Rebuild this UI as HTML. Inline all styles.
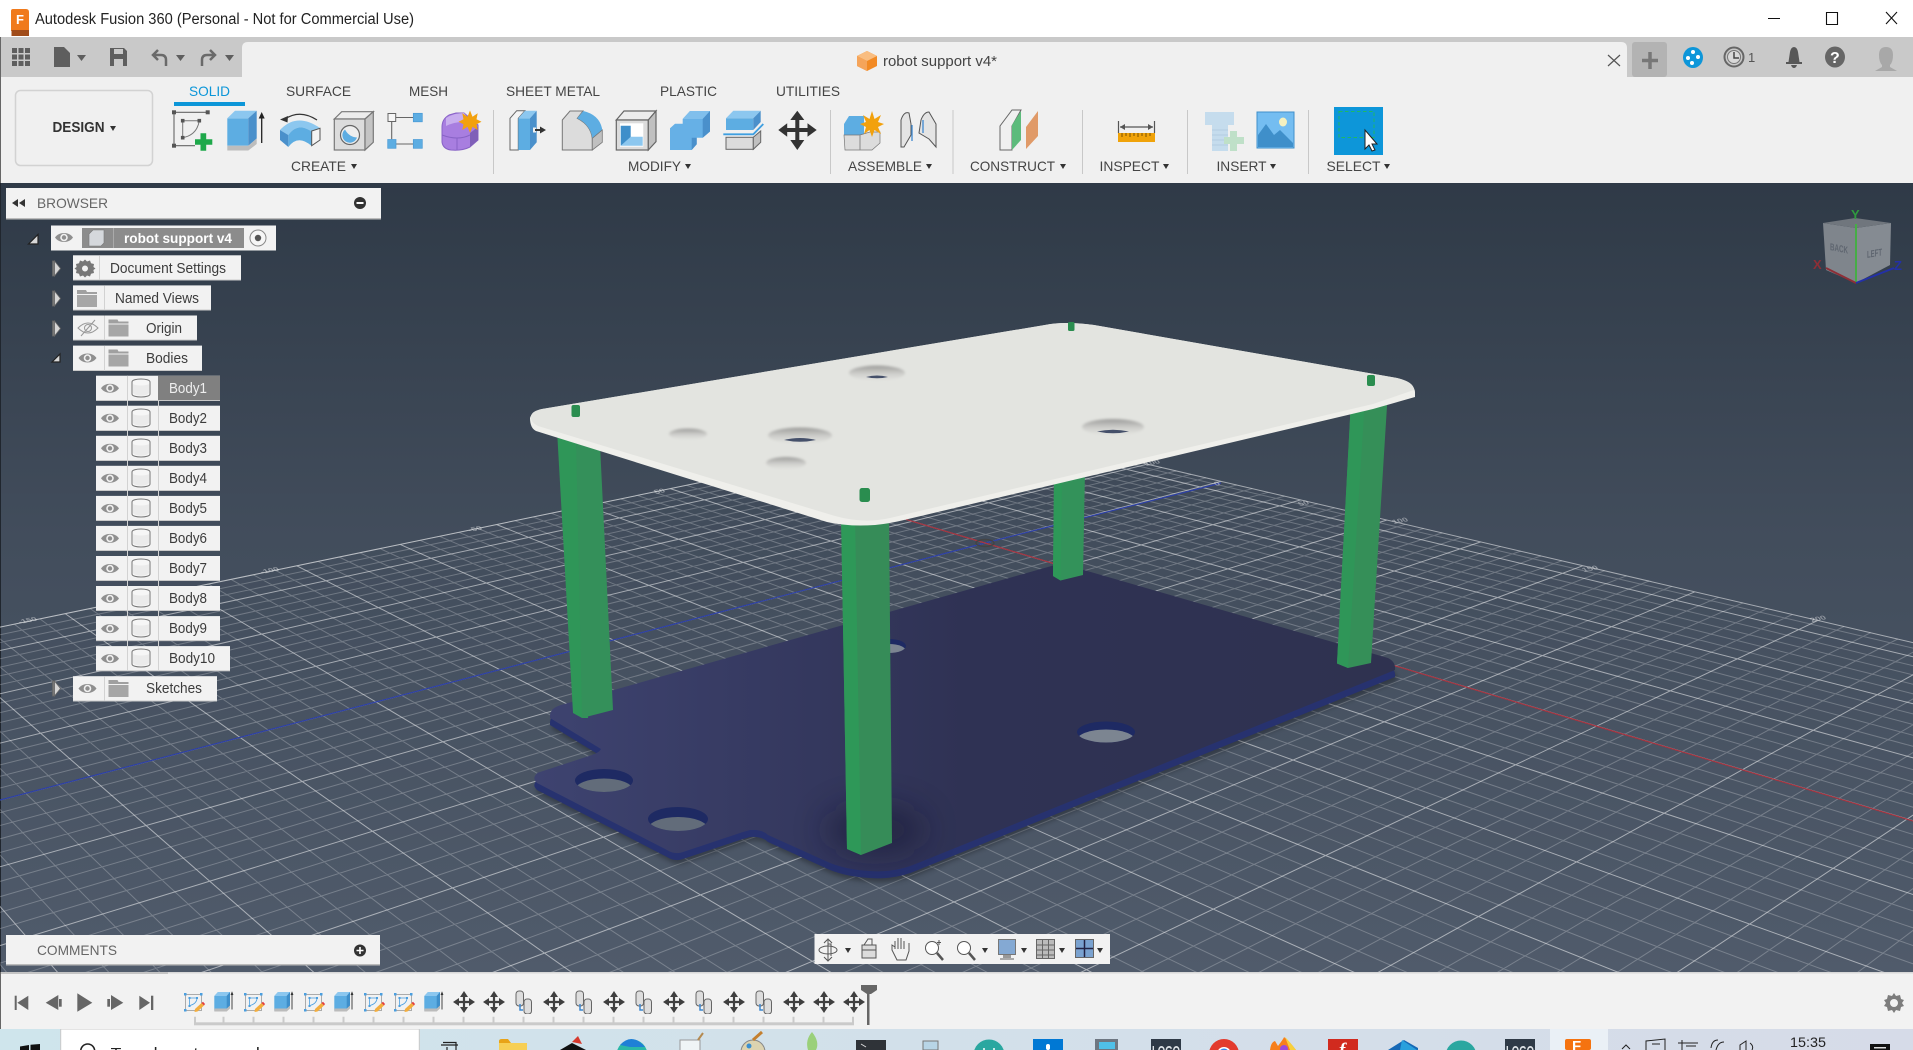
<!DOCTYPE html>
<html lang="en"><head><meta charset="utf-8"><title>Autodesk Fusion 360</title>
<style>
html,body{margin:0;padding:0;width:1913px;height:1050px;overflow:hidden;background:#fff}
svg{display:block}
text{font-family:"Liberation Sans",sans-serif;fill:#3a3a3a}
.tab{font-size:14px;fill:#444}
.lbl{font-size:14px;fill:#444}
.row{font-size:14.5px;fill:#3c3c3c}
.glabel{font-size:9px;fill:rgba(255,255,255,.4);font-weight:bold}
</style></head><body>
<svg xmlns="http://www.w3.org/2000/svg" width="1913" height="1050" viewBox="0 0 1913 1050">
<defs>
<linearGradient id="bg" x1="0" y1="0" x2="0" y2="1"><stop offset="0" stop-color="#2f3a47"/><stop offset=".45" stop-color="#424d5c"/><stop offset="1" stop-color="#505b6b"/></linearGradient>
<linearGradient id="base" x1="0" y1="0" x2="1" y2="0"><stop offset="0" stop-color="#3e4370"/><stop offset=".5" stop-color="#2f3254"/><stop offset="1" stop-color="#2f3250"/></linearGradient>
<linearGradient id="task" x1="0" y1="0" x2="1" y2="0"><stop offset="0" stop-color="#cfe5ec"/><stop offset="1" stop-color="#d6dbe8"/></linearGradient>
<linearGradient id="holeT" x1="0" y1="0" x2="0" y2="1"><stop offset="0" stop-color="#9c9c9a"/><stop offset=".55" stop-color="#cfcfcc"/><stop offset="1" stop-color="#e2e3df"/></linearGradient>
<filter id="b2" x="-30%" y="-30%" width="160%" height="160%"><feGaussianBlur stdDeviation="2.500"/></filter>
<filter id="b1" x="-30%" y="-60%" width="160%" height="220%"><feGaussianBlur stdDeviation="1.200"/></filter>
<filter id="b14" x="-150%" y="-150%" width="400%" height="400%"><feGaussianBlur stdDeviation="16"/></filter>
<clipPath id="h1"><ellipse cx="604" cy="780.500" rx="29" ry="11.500"/></clipPath>
<clipPath id="h2"><ellipse cx="678" cy="819" rx="30" ry="12"/></clipPath>
<clipPath id="h3"><ellipse cx="1106" cy="732" rx="29" ry="10.500"/></clipPath>
<clipPath id="h4"><ellipse cx="889" cy="646" rx="17" ry="7"/></clipPath>
<symbol id="eye" viewBox="0 0 20 12"><path d="M1 6C5 0 15 0 19 6C15 12 5 12 1 6Z" fill="#8f8f8f"/><circle cx="10" cy="6" r="3.800" fill="#f0f0f0"/><circle cx="10" cy="6" r="2.200" fill="#8f8f8f"/></symbol>
<symbol id="cyl" viewBox="0 0 20 20"><path d="M1 4C1 0 19 0 19 4V16C19 20 1 20 1 16Z" fill="#f6f6f6" stroke="#777" stroke-width="1"/><path d="M2 6C5 8 15 8 18 6V15C15 18.500 5 18.500 2 15Z" fill="#ebebeb"/></symbol>
<symbol id="fold" viewBox="0 0 20 17"><path d="M0 0H9L10 2H20V4H0Z" fill="#a0a0a0"/><rect y="5" width="20" height="12" fill="#a6a6a6"/></symbol>
<symbol id="tsk" viewBox="0 0 24 24"><rect x="3.500" y="4.500" width="16" height="16" fill="#f2f2f2" stroke="#999" stroke-width=".8"/><g fill="#4a9fe0"><rect x="2" y="3" width="2.500" height="2.500"/><rect x="18" y="3" width="2.500" height="2.500"/><rect x="2" y="19" width="2.500" height="2.500"/><rect x="6.500" y="7" width="2" height="2"/><rect x="14" y="7" width="2" height="2"/><rect x="6.500" y="15" width="2" height="2"/></g><path d="M8.500 8H14M7.500 9V15M8 15.500Q14 14 15 9" fill="none" stroke="#4a9fe0" stroke-width=".8"/><path d="M13 19L19.500 13L22 15.500L15.500 21.500L12.500 22Z" fill="#f4ad3c"/><path d="M19.500 13L21 11.800L23 14L22 15.500Z" fill="#e23b3b"/></symbol>
<symbol id="tex" viewBox="0 0 24 24"><path d="M2.300 6L6 2H18V17L14.700 20.500H2.300Z" fill="#5dade2"/><path d="M2.300 6L6 2H18L14.700 6Z" fill="#8cc7ef"/><path d="M14.700 6L18 2V17L14.700 20.500Z" fill="#3f8fca"/><path d="M2.300 18.500H14.700L18 15.500V18.500L14.700 21.500H2.300Z" fill="#bbb"/><path d="M20 19.500V3M19 5L20 2.500L21 5" stroke="#333" stroke-width=".9" fill="none"/></symbol>
<symbol id="tmv" viewBox="0 0 24 24"><path d="M12 1L16 7H13.100V10.900H17V8L23 12L17 16V13.100H13.100V17H16L12 23L8 17H10.900V13.100H7V16L1 12L7 8V10.900H10.900V7H8Z" fill="#3f3f3f"/></symbol>
<symbol id="tjt" viewBox="0 0 24 24"><rect x="4" y="1" width="7.500" height="15" rx="3" fill="#ddd" stroke="#666"/><rect x="12" y="9" width="7.500" height="15" rx="3" fill="#ddd" stroke="#666"/><path d="M8 14V20H11" stroke="#3d88d0" fill="none" stroke-width="1.500"/></symbol>
</defs>

<!-- Title bar -->
<rect width="1913" height="37" fill="#fff"/>
<path d="M13 9H26Q29 9 29 12V31H11V11Q11 9 13 9Z" fill="#f07a1c"/>
<rect x="11.500" y="30" width="17.500" height="6" fill="#a04c1a"/>
<text x="16" y="24" style="font-size:13px;font-weight:bold;fill:#fff">F</text>
<text x="35" y="24" textLength="379" lengthAdjust="spacingAndGlyphs" style="font-size:15.500px;fill:#222">Autodesk Fusion 360 (Personal - Not for Commercial Use)</text>
<path d="M1768 18.500H1780M1826.500 12.500H1837.500V24.500H1826.500ZM1886 12L1897 24M1897 12L1886 24" stroke="#111" stroke-width="1.100" fill="none"/>

<!-- Top grey bar -->
<rect y="37" width="1913" height="40" fill="#c9c9c9"/>
<path d="M242 77V48Q242 42 248 42H1621Q1627 42 1627 48V77Z" fill="#f0f0f0"/>
<rect y="77" width="1913" height="106" fill="#f0f0f0"/>
<rect x="1632" y="42" width="35" height="35" rx="3" fill="#b3b3b3"/>
<path d="M1650 52V69M1642 60.500H1658" stroke="#777" stroke-width="3.500"/>
<rect x="0" y="37" width="1" height="992" fill="#666"/>

<!-- Quick access -->
<g fill="#5e5e5e"><rect x="12" y="48" width="5" height="5"/><rect x="18.500" y="48" width="5" height="5"/><rect x="25" y="48" width="5" height="5"/><rect x="12" y="54.500" width="5" height="5"/><rect x="18.500" y="54.500" width="5" height="5"/><rect x="25" y="54.500" width="5" height="5"/><rect x="12" y="61" width="5" height="5"/><rect x="18.500" y="61" width="5" height="5"/><rect x="25" y="61" width="5" height="5"/>
<path d="M54 47H64L70 53V67H54Z"/><path d="M77 55H86L81.500 61Z"/>
<path d="M110 48H124L127 51V66H110ZM114 49V54H123V49ZM114 59V66H123V59Z" fill-rule="evenodd"/>
<path d="M176 55H185L180.500 61Z"/><path d="M225 55H234L229.500 61Z"/></g>
<path d="M166 66V60Q166 55 161 55H154M158 50L153 55L158 60" fill="none" stroke="#6a6a6a" stroke-width="2.500"/>
<path d="M202 66V60Q202 55 207 55H214M210 50L215 55L210 60" fill="none" stroke="#6a6a6a" stroke-width="2.500"/>

<!-- Document tab -->
<path d="M867 51L877 56V66L867 71L857 66V56Z" fill="#f28a24"/><path d="M867 51L877 56L867 61L857 56Z" fill="#f9bd80"/><path d="M867 61V71L857 66V56Z" fill="#f5a45a"/>
<text x="883" y="66" textLength="114" lengthAdjust="spacingAndGlyphs" style="font-size:15px;fill:#444">robot support v4*</text>
<path d="M1608 55L1620 66M1620 55L1608 66" stroke="#555" stroke-width="1.200"/>

<!-- right header icons -->
<ellipse cx="1693" cy="57.500" rx="10" ry="10.500" fill="#0d96d9"/><circle cx="1693" cy="52" r="2" fill="#fff"/><circle cx="1688" cy="58" r="2" fill="#fff"/><circle cx="1698" cy="57" r="2" fill="#fff"/><circle cx="1692" cy="63" r="2" fill="#fff"/>
<circle cx="1734" cy="57" r="9.500" fill="#c9c9c9" stroke="#666" stroke-width="2"/><circle cx="1734" cy="57" r="6.500" fill="#d8d8d8" stroke="#777"/><path d="M1734 52V58H1739" stroke="#444" stroke-width="1.500" fill="none"/>
<text x="1748" y="62" style="font-size:13px;fill:#555">1</text>
<path d="M1794 47Q1797 47 1798 52L1799.500 62H1802V64H1786V62H1788.500L1790 52Q1791 47 1794 47ZM1791 65H1797Q1796 68 1794 68Q1792 68 1791 65Z" fill="#575757"/>
<ellipse cx="1835" cy="57" rx="10" ry="10.500" fill="#666"/><text x="1830" y="63" style="font-size:16px;font-weight:bold;fill:#fff">?</text>
<path d="M1886 47Q1893 47 1893 55Q1893 62 1890 65V67L1897 71H1875L1882 67V65Q1879 62 1879 55Q1879 47 1886 47Z" fill="#a8a8a8"/>

<!-- Ribbon tabs -->
<text class="tab" x="189" y="96" textLength="41" lengthAdjust="spacingAndGlyphs" style="fill:#0c96d8">SOLID</text>
<rect x="174" y="102" width="71" height="4" fill="#0c96d8"/>
<text class="tab" x="286" y="96" textLength="65" lengthAdjust="spacingAndGlyphs">SURFACE</text>
<text class="tab" x="409" y="96" textLength="39" lengthAdjust="spacingAndGlyphs">MESH</text>
<text class="tab" x="506" y="96" textLength="94" lengthAdjust="spacingAndGlyphs">SHEET METAL</text>
<text class="tab" x="660" y="96" textLength="57" lengthAdjust="spacingAndGlyphs">PLASTIC</text>
<text class="tab" x="776" y="96" textLength="64" lengthAdjust="spacingAndGlyphs">UTILITIES</text>

<!-- Design button -->
<rect x="15.500" y="90.500" width="137" height="75" rx="5" fill="#f0f0f0" stroke="#d2d2d2" stroke-width="1.500"/>
<text x="52.500" y="132" textLength="52" lengthAdjust="spacingAndGlyphs" style="font-size:14.500px;font-weight:bold;fill:#333">DESIGN</text>
<path d="M110 126H116L113 131Z" fill="#333"/>

<!-- CREATE icons -->
<!-- sketch -->
<path d="M174 112.300H207.700M174 112.300V145.700M174 145.700H195" stroke="#666" stroke-width="1.100" fill="none"/>
<path d="M182.700 120.700H199.300M182.700 120.700V137.700M182.700 137.700Q197 135 199.300 120.700" stroke="#777" stroke-width="1" fill="none"/>
<g fill="#555"><rect x="172" y="110.300" width="4" height="4"/><rect x="205.700" y="110.300" width="4" height="4"/><rect x="172" y="143.700" width="4" height="4"/><rect x="180.900" y="118.900" width="3.600" height="3.600"/><rect x="197.500" y="118.900" width="3.600" height="3.600"/><rect x="180.900" y="135.900" width="3.600" height="3.600"/></g>
<path d="M200.500 133.300H206.200V139.200H212.300V144.800H206.200V150.700H200.500V144.800H195V139.200H200.500Z" fill="#1ea84a"/>
<!-- extrude -->
<rect x="227.300" y="118.300" width="21" height="27.400" fill="#5dade2"/><path d="M227.300 118.300L235 110.700H256.700L248.300 118.300Z" fill="#8cc7ef"/><path d="M248.300 118.300L256.700 110.700V138.500L248.300 145.700Z" fill="#4a90cb"/><path d="M227.300 145.700H248.300L256.700 138.500V144L248.300 150.500H227.300Z" fill="#bdbdbd"/><path d="M261.700 143V114" stroke="#222" stroke-width="1.300"/><path d="M258.700 118.500L261.700 112L264.700 118.500Z" fill="#222"/>
<!-- revolve -->
<path d="M285 119Q300 109 317 120" fill="none" stroke="#333" stroke-width="1.300"/><path d="M280 119.500L288 116L287.500 122.500Z" fill="#333"/>
<path d="M280 130Q296.700 112 320 128L311.700 131.700Q298 121.700 288.300 135Z" fill="#8cc7ef"/>
<path d="M288.300 135Q298 121.700 311.700 131.700V146Q298 134 288.300 147Z" fill="#5dade2"/>
<path d="M280 130L288.300 135V147L280 140Z" fill="#4a90cb"/>
<path d="M311.700 131L320 128.300V140L311.700 145.700Z" fill="#f4f4f4" stroke="#555"/>
<!-- hole -->
<path d="M334.300 119L341.700 111.700H373.300L365 119Z" fill="#ececec" stroke="#777" stroke-width="1.200"/><rect x="334.300" y="119" width="30.700" height="31" fill="#dcdcdc" stroke="#777" stroke-width="1.200"/><path d="M365 119L373.300 111.700V142.300L365 150Z" fill="#c4c4c4" stroke="#777" stroke-width="1.200"/><circle cx="350" cy="135" r="9.500" fill="#eee" stroke="#666" stroke-width="1.200"/><path d="M345 129.500A7.500 7.500 0 1 0 357 137.500Q349 137 345 129.500Z" fill="#5dade2"/>
<!-- pattern -->
<path d="M395.700 117.500H413.300M395.700 144H413.300M391.700 121.700V139.300" stroke="#666" stroke-width="1.100"/><rect x="388" y="113.500" width="7.700" height="8" fill="#f6f6f6" stroke="#666"/><rect x="413.300" y="113.300" width="9" height="8.500" fill="#5dade2" stroke="#4a9ad6" stroke-width=".7"/><rect x="387.700" y="139.500" width="8.300" height="8.800" fill="#5dade2" stroke="#4a9ad6" stroke-width=".7"/><rect x="413.300" y="139.500" width="9" height="8.800" fill="#5dade2" stroke="#4a9ad6" stroke-width=".7"/>
<!-- form -->
<path d="M442 127Q442 119 449 115L456 113H464L478 125V140L470 147Q462 151 451 150Q443 149 442 142Z" fill="#a87ee0" stroke="#8863c6"/><path d="M446 118Q454 113 464 113L472 123Q458 120 446 126Z" fill="#c8aeee"/><path d="M442 135Q458 141 470 135M457 138V150" stroke="#8863c6" fill="none"/><path d="M470 147V133L478 127V140Z" fill="#7f5fb8"/>
<path d="M470 110.500L472.500 116.800L477.700 113.200L476.500 119.200L481.500 121.700L476.500 124.200L477.700 130L472.500 126.800L470 132.800L467.500 126.800L462.300 130L463.500 124.200L458.500 121.700L463.500 119.200L462.300 113.200L467.500 116.800Z" fill="#f2a10d"/>

<rect x="493" y="110" width="1" height="64" fill="#c8c8c8"/>

<!-- MODIFY icons -->
<path d="M510 118.300L516.700 110.700H525L518.300 118.300V150H510Z" fill="#f4f4f4" stroke="#666"/>
<rect x="518.300" y="118.300" width="11.700" height="31.700" fill="#5dade2"/><path d="M518.300 118.300L525 110.700H536.700L530 118.300Z" fill="#8cc7ef"/><path d="M530 118.300L536.700 110.700V142.300L530 150Z" fill="#4a90cb"/>
<rect x="533" y="127.500" width="3" height="5" fill="#f0f0f0"/><path d="M535 130H541" stroke="#333" stroke-width="2"/><path d="M540 126.500L546 130L540 133.500Z" fill="#333"/>

<path d="M562.300 120L570 111H583L577.300 118.300Q590.700 125 592.300 138.300V150H562.300Z" fill="#dcdcdc" stroke="#777"/>
<path d="M577.300 118.300L583.300 111Q600 115 602.300 130L592.300 138.300Q590.700 125 577.300 118.300Z" fill="#5dade2"/>
<path d="M592.300 138.300L602.300 130V142.300L592.300 150Z" fill="#c0c0c0" stroke="#777" stroke-width=".8"/>

<path d="M616.300 120L624 111H656L648.300 120Z" fill="#ececec" stroke="#666" stroke-width="1.200"/><rect x="616.300" y="120" width="32" height="30" fill="#dcdcdc" stroke="#666" stroke-width="1.200"/><path d="M648.300 120L656 111V141.700L648.300 150Z" fill="#c0c0c0" stroke="#666" stroke-width="1.200"/><rect x="620" y="123.300" width="23.300" height="23.400" fill="#fff"/><path d="M620.700 125.700H630.700V140L620.700 145.700Z" fill="#3f8fca"/><path d="M630.700 136.700H642.700V145.700H620.700Z" fill="#8cc7ef"/>

<path d="M670 128.300L675 123.700H682.700V119L690 111H710V131.500L702.700 137.700H696.700V144.300L691.700 150H670Z" fill="#66b0e6"/>
<path d="M682.700 119L690 111H710L702.700 119Z" fill="#80bfec"/><path d="M702.700 119L710 111V131.500L702.700 137.700Z" fill="#4a90cb"/><path d="M691.700 137.700H696.700V144.300L691.700 150Z" fill="#4a90cb"/>

<path d="M726 118.300L733.300 110.700H760.700L753.300 118.300Z" fill="#8cc7ef"/><rect x="726" y="118.300" width="27.300" height="11.700" fill="#5dade2"/><path d="M753.300 118.300L760.700 110.700V122L753.300 130Z" fill="#4a90cb"/>
<path d="M723.300 134.300H753.300L763.300 124" fill="none" stroke="#3f9fe0" stroke-width="1.800"/>
<rect x="726" y="137.300" width="27.300" height="12" fill="#dcdcdc" stroke="#666"/><path d="M753.300 137.300L760.700 131V142.300L753.300 149.300Z" fill="#c0c0c0" stroke="#666"/>

<path d="M797.300 110.700L804.300 120H799.300V128H807.500V123.300L816.700 130L807.500 136.700V132H799.300V140H804.300L797.300 150L790.300 140H795.300V132H787.200V136.700L778.300 130L787.200 123.300V128H795.300V120H790.300Z" fill="#333"/>

<text class="lbl" x="291" y="171" textLength="55" lengthAdjust="spacingAndGlyphs">CREATE</text><path d="M351 164H357L354 169Z" fill="#333"/>
<text class="lbl" x="628" y="171" textLength="53" lengthAdjust="spacingAndGlyphs">MODIFY</text><path d="M685 164H691L688 169Z" fill="#333"/>

<rect x="830" y="110" width="1" height="64" fill="#c8c8c8"/><rect x="952.500" y="110" width="1" height="64" fill="#c8c8c8"/><rect x="1082" y="110" width="1" height="64" fill="#c8c8c8"/><rect x="1187" y="110" width="1" height="64" fill="#c8c8c8"/><rect x="1308" y="110" width="1" height="64" fill="#c8c8c8"/>

<!-- ASSEMBLE -->
<path d="M844 124L849 116H864V136H844Z" fill="#5dade2"/><path d="M844 135H860L870 132H880V143L872 150H845Z" fill="#dcdcdc" stroke="#777" stroke-width=".7"/><path d="M860 135V150" stroke="#888"/><path d="M872 111L874.500 119L881 115L878 122L884 124L878 127L881 134L874.500 130L872 137L869.500 130L864 134L866 127L860 124L866 122L863 115L869.500 119Z" fill="#f2a10d"/>
<path d="M901 147V120Q904 111 909 113L911 124V135L904 147Z" fill="#e4e4e4" stroke="#555"/><path d="M936 147V124L929 112Q924 112 921 120L919 133L929 139Z" fill="#e4e4e4" stroke="#555"/><path d="M912 125V141M923 120V133" stroke="#3d88d0" stroke-width="1.300"/>
<text class="lbl" x="848" y="171" textLength="74" lengthAdjust="spacingAndGlyphs">ASSEMBLE</text><path d="M926 164H932L929 169Z" fill="#333"/>

<!-- CONSTRUCT -->
<path d="M1000 126L1012 110H1021L1012 126V150H1000Z" fill="#f0f0f0" stroke="#666"/><path d="M1012 125L1021 111V140L1012 150Z" fill="#5dbb7c"/><path d="M1026 127L1038 111V136L1026 149Z" fill="#e09a68"/>
<text class="lbl" x="970" y="171" textLength="85" lengthAdjust="spacingAndGlyphs">CONSTRUCT</text><path d="M1060 164H1066L1063 169Z" fill="#333"/>

<!-- INSPECT -->
<path d="M1118.500 121V133M1154.500 121V133M1120 127H1153" stroke="#555" stroke-width="1.200"/><path d="M1120 127L1125 124V130ZM1153 127L1148 124V130Z" fill="#555"/><rect x="1118" y="133" width="37" height="9" fill="#f0a30a"/><path d="M1122 133V137M1126 133V136M1130 133V137M1134 133V136M1138 133V137M1142 133V136M1146 133V137M1150 133V136" stroke="#7a5000"/>
<text class="lbl" x="1099.500" y="171" textLength="60" lengthAdjust="spacingAndGlyphs">INSPECT</text><path d="M1163 164H1169L1166 169Z" fill="#333"/>

<!-- INSERT -->
<path d="M1205 112H1234V125H1228V151H1212V125H1205Z" fill="#c5dced"/><path d="M1212 130H1228M1212 135H1228M1212 140H1228M1212 145H1228" stroke="#b2cde1"/><path d="M1230 134H1237V140H1244V147H1237V154H1230V147H1224V140H1230Z" fill="#bfe0c8" transform="translate(0,-3)"/>
<rect x="1257" y="112" width="37" height="36" fill="#74bdf1" stroke="#3f8fca"/><path d="M1258 147V135L1266 124L1274 135L1280 130L1293 143V147Z" fill="#3f8fca"/><ellipse cx="1283" cy="122" rx="4" ry="4.500" fill="#f5f1c0"/>
<text class="lbl" x="1216.500" y="171" textLength="50" lengthAdjust="spacingAndGlyphs">INSERT</text><path d="M1270 164H1276L1273 169Z" fill="#333"/>

<!-- SELECT -->
<rect x="1334" y="107" width="49" height="48" fill="#0d96d9"/><rect x="1339" y="111.500" width="35" height="26" fill="none" stroke="#1fb864" stroke-dasharray="3.500 2.500"/>
<path d="M1365 130L1365 149L1369 145L1372 151L1375 150L1372 144L1377 144Z" fill="#fff" stroke="#222"/>
<text class="lbl" x="1326.500" y="171" textLength="54" lengthAdjust="spacingAndGlyphs">SELECT</text><path d="M1384 164H1390L1387 169Z" fill="#333"/>

<!-- Viewport -->
<rect y="183" width="1913" height="789" fill="url(#bg)"/>
<rect y="183" width="1" height="789" fill="#20262e"/>
<svg x="0" y="183" width="1913" height="789" viewBox="0 183 1913 789">
<g id="grid" fill="none"></g>
<path d="M0 800L985 543L1221 483" stroke="#2c3fa6" stroke-width="1.200" fill="none"/>
<path d="M906 519.400L985 543L1913 821" stroke="#a5333f" stroke-width="1.200" fill="none"/>
<ellipse cx="985" cy="543" rx="9" ry="3.500" fill="none" stroke="#444" stroke-width="1.500"/>
<g>
<text class="glabel" transform="matrix(1 -.2 .5 .6 20 624)">-150</text>
<text class="glabel" transform="matrix(1 -.2 .5 .6 262 574)">-100</text>
<text class="glabel" transform="matrix(1 -.2 .5 .6 470 532)">-50</text>
<text class="glabel" transform="matrix(1 -.2 .5 .6 656 494)">50</text>
<text class="glabel" transform="matrix(1 -.2 .5 .6 1146 466)">100</text>
<text class="glabel" transform="matrix(1 -.2 .5 .6 1216 486)">0</text>
<text class="glabel" transform="matrix(1 -.2 .5 .6 1300 506)">50</text>
<text class="glabel" transform="matrix(1 -.2 .5 .6 1394 524)">100</text>
<text class="glabel" transform="matrix(1 -.2 .5 .6 1584 572)">150</text>
<text class="glabel" transform="matrix(1 -.2 .5 .6 1812 622)">200</text>
</g>

<!-- Base plate -->
<path id="bp" transform="translate(2,11)" d="M550 716Q550 708 561 705L1051.500 566Q1060 563 1070 566L1388 658Q1396 662 1395 670L918 863Q895 873 870 871Q848 870 830 863L768 835Q762 829 750 830L743 832L683 852Q675 855 667 850L537 783Q533 779 535 776Q536 773 540 772L592 755Q600 752 601 749L550 718Z" fill="#000" opacity=".28" filter="url(#b2)"/>
<path transform="translate(0,7)" d="M550 716Q550 708 561 705L1051.500 566Q1060 563 1070 566L1388 658Q1396 662 1395 670L918 863Q895 873 870 871Q848 870 830 863L768 835Q762 829 750 830L743 832L683 852Q675 855 667 850L537 783Q533 779 535 776Q536 773 540 772L592 755Q600 752 601 749L550 718Z" fill="#27326f"/>
<path d="M550 716Q550 708 561 705L1051.500 566Q1060 563 1070 566L1388 658Q1396 662 1395 670L918 863Q895 873 870 871Q848 870 830 863L768 835Q762 829 750 830L743 832L683 852Q675 855 667 850L537 783Q533 779 535 776Q536 773 540 772L592 755Q600 752 601 749L550 718Z" fill="url(#base)"/>
<ellipse cx="875" cy="830" rx="50" ry="24" fill="#15172d" opacity=".5" filter="url(#b14)"/>

<!-- Holes -->
<g>
<ellipse cx="1106" cy="732" rx="29" ry="10.500" fill="#1e2a63"/><ellipse clip-path="url(#h3)" cx="1106" cy="740" rx="29" ry="10.500" fill="#7c8591"/>
<ellipse cx="604" cy="780.500" rx="29" ry="11.500" fill="#1e2a63"/><ellipse clip-path="url(#h1)" cx="604" cy="790" rx="29" ry="11.500" fill="#626c7a"/>
<ellipse cx="678" cy="819" rx="30" ry="12" fill="#1e2a63"/><ellipse clip-path="url(#h2)" cx="678" cy="829" rx="30" ry="12" fill="#626c7a"/>
<ellipse cx="889" cy="646" rx="17" ry="7" fill="#1e2a63"/><ellipse clip-path="url(#h4)" cx="889" cy="651" rx="17" ry="7" fill="#7c8591"/>
</g>

<!-- Legs -->
<path d="M557 430L576 438L588 718L582 718L573 713Z" fill="#2f9658"/><path d="M576 438L600 445L613 710L582 718Z" fill="#34905a"/>
<path d="M1054 480L1085 470L1083 575L1060.500 580.500L1053 576Z" fill="#33925a"/><path d="M1054 480H1062L1060.500 580.500L1053 576Z" fill="#2e9858"/>
<path d="M1351 400L1388 390L1371 663L1348 668L1337 663.500Z" fill="#358f58"/><path d="M1351 400L1365 398L1348 668L1337 663.500Z" fill="#2f9658"/>
<path d="M841 515H889L892 843L861 855L847 849Z" fill="#368c58"/><path d="M841 515H855L861 855L847 849Z" fill="#2e9858"/>

<!-- Top plate -->
<path d="M530 418Q532 411 542 409L1045 325Q1064 321 1094 325L1397 378Q1414 382 1415 392V397L1373 409L904 520Q864 530 827 522L536 431Q530 428 530 418Z" fill="#efefeb"/>
<path d="M531 416Q532 411 542 409L1045 325Q1064 321 1094 325L1397 378Q1414 382 1414 390L1373 404L890 518Q864 524 835 516L538 426Q530 422 531 416Z" fill="#e3e4e0"/>
<g>
<ellipse cx="877" cy="373" rx="28" ry="7.500" fill="url(#holeT)" filter="url(#b1)"/><path d="M866 377Q877 374 888 377Q877 379.500 866 377Z" fill="#45506a"/>
<ellipse cx="688" cy="434" rx="19" ry="5.500" fill="url(#holeT)" filter="url(#b1)"/>
<ellipse cx="800" cy="435.500" rx="32" ry="8" fill="url(#holeT)" filter="url(#b1)"/><path d="M784 440Q800 436 816 440Q800 443.500 784 440Z" fill="#45506a"/>
<ellipse cx="786" cy="463" rx="20" ry="6" fill="url(#holeT)" filter="url(#b1)"/>
<ellipse cx="1113" cy="427" rx="31" ry="8" fill="url(#holeT)" filter="url(#b1)"/><path d="M1097 431.500Q1113 428 1129 431.500Q1113 435 1097 431.500Z" fill="#45506a"/>
</g>
<g fill="#2a8d4f"><rect x="571.500" y="405" width="8.500" height="12" rx="2"/><rect x="1068" y="322" width="6.500" height="9" rx="1.500"/><rect x="1367" y="375" width="8" height="11" rx="2"/><rect x="859.500" y="488" width="10.500" height="14" rx="2.500"/></g>

<!-- ViewCube -->
<g>
<path d="M1856 228L1823 223L1826 270L1856 283Z" fill="#7f858c"/><path d="M1856 228L1891 223L1890 265L1856 283Z" fill="#858b92"/><path d="M1823 223L1855 218L1891 223L1856 228Z" fill="#70767d"/>
<text transform="matrix(1 .2 0 1 1830 250)" textLength="18" lengthAdjust="spacingAndGlyphs" style="font-size:10px;font-weight:bold;fill:#5f6670">BACK</text>
<text transform="matrix(1 -.18 0 1 1867 258)" textLength="15" lengthAdjust="spacingAndGlyphs" style="font-size:10px;font-weight:bold;fill:#5f6670">LEFT</text>
<path d="M1856 224V283" stroke="#46ad46" stroke-width="2"/><path d="M1826 268L1856 283" stroke="#8e2e36" stroke-width="2"/><path d="M1856 283L1894 268" stroke="#2330a8" stroke-width="2"/>
<text x="1851" y="219" style="font-size:13px;fill:#2f9a3f;font-weight:bold">Y</text><text x="1813" y="269" style="font-size:13px;fill:#8e2e36;font-weight:bold">X</text><text x="1894" y="270" style="font-size:13px;fill:#2330a8;font-weight:bold">Z</text>
</g>
</svg>

<!-- Browser panel -->
<rect x="6" y="188" width="375" height="31" fill="#f2f2f2"/><rect x="6" y="218" width="375" height="1.500" fill="#bbb"/>
<path d="M12 203L18 199V207ZM19 203L25 199V207Z" fill="#333"/>
<text x="37" y="208" textLength="71" lengthAdjust="spacingAndGlyphs" style="font-size:14px;fill:#666">BROWSER</text>
<circle cx="360" cy="203" r="6" fill="#333"/><rect x="356.500" y="202" width="7" height="2" fill="#fff"/>

<path d="M28.500 244H38V234.500Z" fill="#d8d8d8" stroke="#222" stroke-width="1.200"/>
<rect x="51" y="225.500" width="225" height="25" fill="#f2f2f2"/>
<use href="#eye" x="54" y="231" width="20" height="13"/>
<rect x="82" y="228" width="162" height="20" fill="#8c8c8c"/><rect x="113" y="228" width="1" height="20" fill="#aaa"/>
<path d="M89 234L93 230H104V243L101 246H89Z" fill="#d5d8dc" stroke="#777" stroke-width=".6"/>
<text x="124" y="243" textLength="108" lengthAdjust="spacingAndGlyphs" style="font-size:14px;font-weight:bold;fill:#fff">robot support v4</text>
<circle cx="258" cy="238" r="8" fill="#f6f6f6" stroke="#888"/><circle cx="258" cy="238" r="3.200" fill="#555"/>

<g fill="#f2f2f2">
<rect x="73" y="255.300" width="168" height="25"/><rect x="73" y="285.400" width="138" height="25"/><rect x="73" y="315.500" width="124" height="25"/><rect x="73" y="345.600" width="129" height="25"/>
<rect x="96" y="375.700" width="124" height="25"/><rect x="96" y="405.700" width="124" height="25"/><rect x="96" y="435.800" width="124" height="25"/><rect x="96" y="465.800" width="124" height="25"/><rect x="96" y="495.900" width="124" height="25"/><rect x="96" y="525.900" width="124" height="25"/><rect x="96" y="556" width="124" height="25"/><rect x="96" y="586" width="124" height="25"/><rect x="96" y="616.100" width="124" height="25"/><rect x="96" y="646.100" width="134" height="25"/>
<rect x="73" y="676.200" width="144" height="25"/>
</g>
<rect x="158" y="375.700" width="62" height="25" fill="#808080"/>
<path d="M73 280H241M73 310H211M73 340H197M73 370.500H202M96 400.500H220M96 430.500H220M96 460.500H220M96 490.500H220M96 520.500H220M96 550.500H220M96 580.500H220M96 610.500H220M96 640.500H220M96 670.800H230M73 701H217" stroke="#c9c9c9" fill="none"/>
<g fill="#d2d2d2">
<rect x="99" y="255.300" width="1" height="25"/><rect x="104" y="285.400" width="1" height="25"/><rect x="104" y="315.500" width="1" height="25"/><rect x="104" y="345.600" width="1" height="25"/><rect x="104" y="676.200" width="1" height="25"/>
<rect x="127" y="375.700" width="1" height="295.400"/><rect x="158" y="400.700" width="1" height="270.400"/>
</g>
<!-- triangles -->
<g fill="#d5d5d5" stroke="#666" stroke-width=".8">
<path d="M52.500 261V276H54.500V261Z" fill="#777"/><path d="M54.500 261L60.500 268.500L54.500 276Z"/>
<path d="M52.500 291V306H54.500V291Z" fill="#777"/><path d="M54.500 291L60.500 298.500L54.500 306Z"/>
<path d="M52.500 321V336H54.500V321Z" fill="#777"/><path d="M54.500 321L60.500 328.500L54.500 336Z"/>
<path d="M52.500 681V696H54.500V681Z" fill="#777"/><path d="M54.500 681L60.500 688.500L54.500 696Z"/>
</g>
<path d="M52 362H60V354Z" fill="#d8d8d8" stroke="#222" stroke-width="1.200"/>
<!-- icons col 1 -->
<path d="M85 259.500L87 261.500L90 260.500L91 263.300L94 264L93.400 267L95.500 268.500L93.400 270L94 273L91 273.700L90 276.500L87 275.500L85 277.500L83 275.500L80 276.500L79 273.700L76 273L76.600 270L74.500 268.500L76.600 267L76 264L79 263.300L80 260.500L83 261.500ZM85 265.500A3 3 0 1 0 85 271.500A3 3 0 1 0 85 265.500Z" fill="#777" fill-rule="evenodd"/>
<use href="#fold" x="77" y="290" width="20" height="17"/>
<g fill="none" stroke="#999"><path d="M78 328Q88 318 98 328Q88 338 78 328Z"/><circle cx="88" cy="328" r="3.500"/><path d="M81 336L95 320"/></g>
<use href="#fold" x="108.500" y="319.500" width="20" height="17"/>
<use href="#eye" x="77.500" y="351.500" width="20" height="13"/><use href="#fold" x="108.500" y="349.500" width="20" height="17"/>
<use href="#eye" x="77.500" y="682" width="20" height="13"/><use href="#fold" x="108.500" y="680" width="20" height="17"/>

<use href="#eye" x="100" y="381.700" width="20" height="13"/><use href="#cyl" x="131" y="378" width="20" height="20"/>
<use href="#eye" x="100" y="411.700" width="20" height="13"/><use href="#cyl" x="131" y="408" width="20" height="20"/>
<use href="#eye" x="100" y="441.800" width="20" height="13"/><use href="#cyl" x="131" y="438" width="20" height="20"/>
<use href="#eye" x="100" y="471.800" width="20" height="13"/><use href="#cyl" x="131" y="468" width="20" height="20"/>
<use href="#eye" x="100" y="501.900" width="20" height="13"/><use href="#cyl" x="131" y="498" width="20" height="20"/>
<use href="#eye" x="100" y="531.900" width="20" height="13"/><use href="#cyl" x="131" y="528" width="20" height="20"/>
<use href="#eye" x="100" y="562" width="20" height="13"/><use href="#cyl" x="131" y="558" width="20" height="20"/>
<use href="#eye" x="100" y="592" width="20" height="13"/><use href="#cyl" x="131" y="588" width="20" height="20"/>
<use href="#eye" x="100" y="622.100" width="20" height="13"/><use href="#cyl" x="131" y="618" width="20" height="20"/>
<use href="#eye" x="100" y="652.100" width="20" height="13"/><use href="#cyl" x="131" y="648" width="20" height="20"/>

<text class="row" x="110" y="273" textLength="116" lengthAdjust="spacingAndGlyphs">Document Settings</text>
<text class="row" x="115" y="303" textLength="84" lengthAdjust="spacingAndGlyphs">Named Views</text>
<text class="row" x="146" y="333" textLength="36" lengthAdjust="spacingAndGlyphs">Origin</text>
<text class="row" x="146" y="363" textLength="42" lengthAdjust="spacingAndGlyphs">Bodies</text>
<text class="row" x="169" y="393" textLength="38" lengthAdjust="spacingAndGlyphs" style="fill:#eee">Body1</text>
<text class="row" x="169" y="423" textLength="38" lengthAdjust="spacingAndGlyphs">Body2</text>
<text class="row" x="169" y="453" textLength="38" lengthAdjust="spacingAndGlyphs">Body3</text>
<text class="row" x="169" y="483" textLength="38" lengthAdjust="spacingAndGlyphs">Body4</text>
<text class="row" x="169" y="513" textLength="38" lengthAdjust="spacingAndGlyphs">Body5</text>
<text class="row" x="169" y="543" textLength="38" lengthAdjust="spacingAndGlyphs">Body6</text>
<text class="row" x="169" y="573" textLength="38" lengthAdjust="spacingAndGlyphs">Body7</text>
<text class="row" x="169" y="603" textLength="38" lengthAdjust="spacingAndGlyphs">Body8</text>
<text class="row" x="169" y="633" textLength="38" lengthAdjust="spacingAndGlyphs">Body9</text>
<text class="row" x="169" y="663" textLength="46" lengthAdjust="spacingAndGlyphs">Body10</text>
<text class="row" x="146" y="693" textLength="56" lengthAdjust="spacingAndGlyphs">Sketches</text>

<!-- Comments -->
<rect x="6" y="935" width="374" height="30" fill="#f2f2f2"/><rect x="6" y="964" width="374" height="1.500" fill="#bbb"/>
<text x="37" y="955" textLength="80" lengthAdjust="spacingAndGlyphs" style="font-size:14px;fill:#666">COMMENTS</text>
<circle cx="360" cy="950.500" r="6" fill="#333"/><path d="M356.500 950.500H363.500M360 947V954" stroke="#fff" stroke-width="1.600"/>

<!-- View toolbar -->
<rect x="814.500" y="934" width="295.500" height="30" fill="#f2f2f2"/>
<g fill="none" stroke="#555"><ellipse cx="828" cy="950" rx="9" ry="4"/><path d="M828 940V960M824 943L828 939L832 943M824 957L828 961L832 957M828 944H831V956"/>
<rect x="862" y="945" width="14" height="13" fill="#dcdcdc"/><path d="M862 950H876M864 945L868 939H872V945"/>
<path d="M895 949V941M898 949V938M901 949V938M904 949V941M895 947L892 945V950L897 960H906L909 951V943"/>
<circle cx="932" cy="948" r="6.500" fill="#fff"/><path d="M937 953L943 960" stroke-width="2.500"/><path d="M939 940V945M937 942.500H941"/>
<circle cx="964" cy="948" r="6.500" fill="#fff"/><path d="M969 953L975 960" stroke-width="2.500"/>
</g>
<g fill="#333"><path d="M845 948H851L848 953Z"/><path d="M982 948H988L985 953Z"/><path d="M1021 948H1027L1024 953Z"/><path d="M1059 948H1065L1062 953Z"/><path d="M1097 948H1103L1100 953Z"/></g>
<rect x="998.500" y="939.500" width="17" height="15" fill="#84a9d3" stroke="#777"/><rect x="1003" y="955" width="8" height="3" fill="#999"/><rect x="1000" y="958" width="14" height="2" fill="#aaa"/>
<rect x="1036.500" y="939.500" width="18" height="19" fill="#bbb" stroke="#666"/><path d="M1042.500 940V958M1048.500 940V958M1037 945H1054M1037 950H1054M1037 955H1054" stroke="#666"/>
<rect x="1075.500" y="939.500" width="18" height="18" fill="#7aa2d0" stroke="#666"/><path d="M1084.500 940V957M1076 948.500H1093" stroke="#224" stroke-width="1.500"/>

<!-- Timeline bar -->
<rect y="972" width="1913" height="57" fill="#f2f2f2"/>
<rect y="972" width="1913" height="1.500" fill="#d8d8d8"/>
<rect x="0" y="972" width="168" height="2" fill="#c4c4c4"/>
<rect x="0" y="972" width="1" height="57" fill="#666"/>
<g fill="#666">
<rect x="14.700" y="995.700" width="2" height="14.300"/><path d="M28.300 995.700L17.300 1002.700L28.300 1010Z"/>
<path d="M45.700 1002.700L58.300 995V1010Z"/><rect x="59" y="999" width="2.700" height="7.700"/>
<path d="M77.300 993.300V1011.700L92.300 1002.700Z"/>
<rect x="107.300" y="999" width="2.700" height="7.700"/><path d="M111 995V1010L123.300 1002.700Z"/>
<path d="M139.300 995.700V1010L150 1002.700Z"/><rect x="151" y="995.700" width="2.300" height="14.300"/>
</g>
<!-- Timeline icons -->
<use href="#tsk" x="182" y="990" width="24" height="24"/><use href="#tex" x="212" y="990" width="24" height="24"/><use href="#tsk" x="242" y="990" width="24" height="24"/><use href="#tex" x="272" y="990" width="24" height="24"/><use href="#tsk" x="302" y="990" width="24" height="24"/><use href="#tex" x="332" y="990" width="24" height="24"/><use href="#tsk" x="362" y="990" width="24" height="24"/><use href="#tsk" x="392" y="990" width="24" height="24"/><use href="#tex" x="422" y="990" width="24" height="24"/>
<use href="#tmv" x="452" y="990" width="24" height="24"/><use href="#tmv" x="482" y="990" width="24" height="24"/><use href="#tjt" x="512" y="990" width="24" height="24"/><use href="#tmv" x="542" y="990" width="24" height="24"/><use href="#tjt" x="572" y="990" width="24" height="24"/><use href="#tmv" x="602" y="990" width="24" height="24"/><use href="#tjt" x="632" y="990" width="24" height="24"/><use href="#tmv" x="662" y="990" width="24" height="24"/><use href="#tjt" x="692" y="990" width="24" height="24"/><use href="#tmv" x="722" y="990" width="24" height="24"/><use href="#tjt" x="752" y="990" width="24" height="24"/><use href="#tmv" x="782" y="990" width="24" height="24"/><use href="#tmv" x="812" y="990" width="24" height="24"/><use href="#tmv" x="842" y="990" width="24" height="24"/>
<rect x="194" y="1022.300" width="660" height="3" fill="#cacaca"/>
<path d="M195 1016.700V1023M223.500 1016.700V1023M253.500 1016.700V1023M283.500 1016.700V1023M313.500 1016.700V1023M343.500 1016.700V1023M373.500 1016.700V1023M403.500 1016.700V1023M433.500 1016.700V1023M463.500 1016.700V1023M493.500 1016.700V1023M523.500 1016.700V1023M553.500 1016.700V1023M583.500 1016.700V1023M613.500 1016.700V1023M643.500 1016.700V1023M673.500 1016.700V1023M703.500 1016.700V1023M733.500 1016.700V1023M763.500 1016.700V1023M793.500 1016.700V1023M823.500 1016.700V1023M853 1016.700V1023" stroke="#cacaca" stroke-width="2"/>
<path d="M861 985H877V990L871 994H867L861 990Z" fill="#666"/><rect x="867" y="993" width="2.500" height="32" fill="#666"/>
<path d="M1894 993L1896 996L1900 995L1901 999L1904 1000L1902 1003L1904 1006L1901 1007L1900 1011L1896 1010L1894 1013L1892 1010L1888 1011L1887 1007L1884 1006L1886 1003L1884 1000L1887 999L1888 995L1892 996ZM1894 999A4 4 0 1 0 1894 1007A4 4 0 1 0 1894 999Z" fill="#7d7d7d" fill-rule="evenodd"/>

<!-- Taskbar -->
<svg x="0" y="1029" width="1913" height="21" viewBox="0 1029 1913 21">
<rect y="1029" width="1913" height="21" fill="url(#task)"/>
<rect x="1550" y="1029" width="58" height="21" fill="#eaf0f6"/>
<path d="M20 1046.500L29 1045V1050H20ZM30.500 1044.800L40 1044V1050H30.500Z" fill="#111"/>
<rect x="60.700" y="1029" width="358.600" height="22" fill="#fff" stroke="#c8c8c8"/>
<circle cx="87.700" cy="1051" r="7" fill="none" stroke="#222" stroke-width="1.500"/>
<text x="110.700" y="1058" textLength="155" lengthAdjust="spacingAndGlyphs" style="font-size:15px;fill:#222">Type here to search</text>
<path d="M441 1045H458M443 1042.500H456V1050M447 1047V1050" stroke="#222" stroke-width="1.200" fill="none"/>
<path d="M499 1044V1041Q499 1039 502 1039H508L511 1043V1044Z" fill="#e8a317"/><rect x="499" y="1043" width="28" height="7" fill="#f7cf55"/>
<path d="M560 1050L572 1043L586 1050Z" fill="#111"/><path d="M572 1042L578 1036L582 1044Z" fill="#d63a2e"/>
<circle cx="632" cy="1055" r="15.500" fill="#2bb8a8"/><path d="M620 1045Q632 1032 645 1047L630 1047Z" fill="#1f80d6"/>
<rect x="680" y="1040" width="20" height="12" fill="#f0f4f6" stroke="#999"/><path d="M698 1040L703 1033" stroke="#b58a50" stroke-width="2"/>
<circle cx="753" cy="1052" r="12" fill="#dcd3b0" stroke="#888"/><path d="M753 1040L762 1032" stroke="#c47f2e" stroke-width="3"/><circle cx="749" cy="1046" r="2.500" fill="#3a8fd0"/>
<path d="M808 1050Q805 1040 812 1032Q820 1042 816 1050Z" fill="#9ad07a"/>
<rect x="856" y="1040" width="30" height="10" fill="#2f3338"/><path d="M861 1044L866 1047" stroke="#ddd"/>
<path d="M923 1041H938V1050H923Z" fill="#b8d5e6" stroke="#777"/>
<circle cx="989" cy="1055" r="15.500" fill="#2aa7a0"/><path d="M984 1048V1053M994 1048V1053" stroke="#fff" stroke-width="1.500"/>
<rect x="1033" y="1039" width="30" height="11" fill="#0078d4"/><rect x="1046" y="1044" width="4" height="6" rx="2" fill="#fff"/>
<rect x="1095" y="1039" width="23" height="11" fill="#6e7782"/><rect x="1099" y="1042" width="16" height="7" fill="#4fc0e8"/>
<rect x="1151" y="1039" width="30" height="11" fill="#2f3a47"/><text x="1152" y="1056" textLength="28" lengthAdjust="spacingAndGlyphs" style="font-size:15px;font-weight:bold;fill:#dfe3e7">LOGO</text>
<circle cx="1224" cy="1054" r="15" fill="#e33b2e"/><circle cx="1224" cy="1054" r="7" fill="#fff"/><circle cx="1224" cy="1054" r="5.500" fill="#3a87ee"/><path d="M1231 1050H1239V1050.500L1236 1052Z" fill="#f8c91e"/>
<path d="M1270 1050Q1271 1042 1275 1041L1278 1046Q1284 1038 1284 1037Q1290 1042 1296 1050Z" fill="#f77f1c"/><circle cx="1284" cy="1049" r="4" fill="#9b4ad8"/><path d="M1285 1037Q1290 1042 1296 1050H1290Z" fill="#f8d03c"/>
<rect x="1328" y="1039" width="30" height="11" fill="#d12a1e"/><text x="1339" y="1056" style="font-size:19px;font-weight:bold;font-style:italic;fill:#fff;font-family:'Liberation Serif',serif">f</text>
<path d="M1388 1050L1404 1040L1418 1048V1050Z" fill="#1669b6"/><path d="M1402 1040L1417 1050H1400Z" fill="#29a0dd"/>
<circle cx="1461" cy="1056" r="15.500" fill="#2aa7a0"/>
<rect x="1505" y="1039" width="30" height="11" fill="#2f3a47"/><text x="1506" y="1056" textLength="28" lengthAdjust="spacingAndGlyphs" style="font-size:15px;font-weight:bold;fill:#dfe3e7">LOGO</text>
<rect x="1565" y="1039" width="26" height="11" rx="2" fill="#f57310"/><text x="1572" y="1051" style="font-size:15px;font-weight:bold;fill:#fff">F</text>
<g fill="none" stroke="#222"><path d="M1622 1049L1626 1045L1630 1049"/><path d="M1646 1050V1041L1665 1039V1050M1652 1044H1660"/><path d="M1678 1043H1698M1682 1040V1050M1686 1046H1696"/><path d="M1716 1050Q1718 1042 1724 1042M1711 1048Q1712 1040 1718 1040"/><path d="M1740 1050V1045L1746 1041V1050M1750 1043Q1754 1046 1752 1050"/></g>
<text x="1790" y="1047" textLength="36" lengthAdjust="spacingAndGlyphs" style="font-size:14px;fill:#222">15:35</text>
<rect x="1870" y="1044" width="20" height="6" fill="#111"/><rect x="1874" y="1047" width="12" height="1.500" fill="#ddd"/>
</svg>
</svg>
<script>
(function(){
var a=-0.0429,b=-0.0362;
function P(u,v){var w=1+a*u+b*v;return ((a*u*-780+b*v*3180+985)/w).toFixed(1)+" "+((a*u*15+b*v*-30+543)/w).toFixed(1);}
var minor="",major="",umin=-3.6,vmin=-3.33;
function vEnd(u){return Math.min(14,(0.92+a*u)/(-b));}
function uEnd(v){return Math.min(14,(0.92+b*v)/(-a));}
for(var i=-18;i<=70;i++){
 var k=i/5,s="";
 if(k>=umin){var e=vEnd(k);if(e>vmin)s+="M"+P(k,vmin)+"L"+P(k,e);}
 if(k>=vmin){var e2=uEnd(k);if(e2>umin)s+="M"+P(umin,k)+"L"+P(e2,k);}
 if(i%5===0)major+=s;else minor+=s;
}
major+="M"+P(umin,vmin)+"L"+P(umin,vEnd(umin))+"M"+P(umin,vmin)+"L"+P(uEnd(vmin),vmin);
var ns="http://www.w3.org/2000/svg",G=document.getElementById("grid");
var p1=document.createElementNS(ns,"path");p1.setAttribute("d",minor);p1.setAttribute("stroke","rgba(255,255,255,.24)");p1.setAttribute("stroke-width","1");G.appendChild(p1);
var p2=document.createElementNS(ns,"path");p2.setAttribute("d",major);p2.setAttribute("stroke","rgba(255,255,255,.52)");p2.setAttribute("stroke-width","1");G.appendChild(p2);
})();
</script>
</body></html>
